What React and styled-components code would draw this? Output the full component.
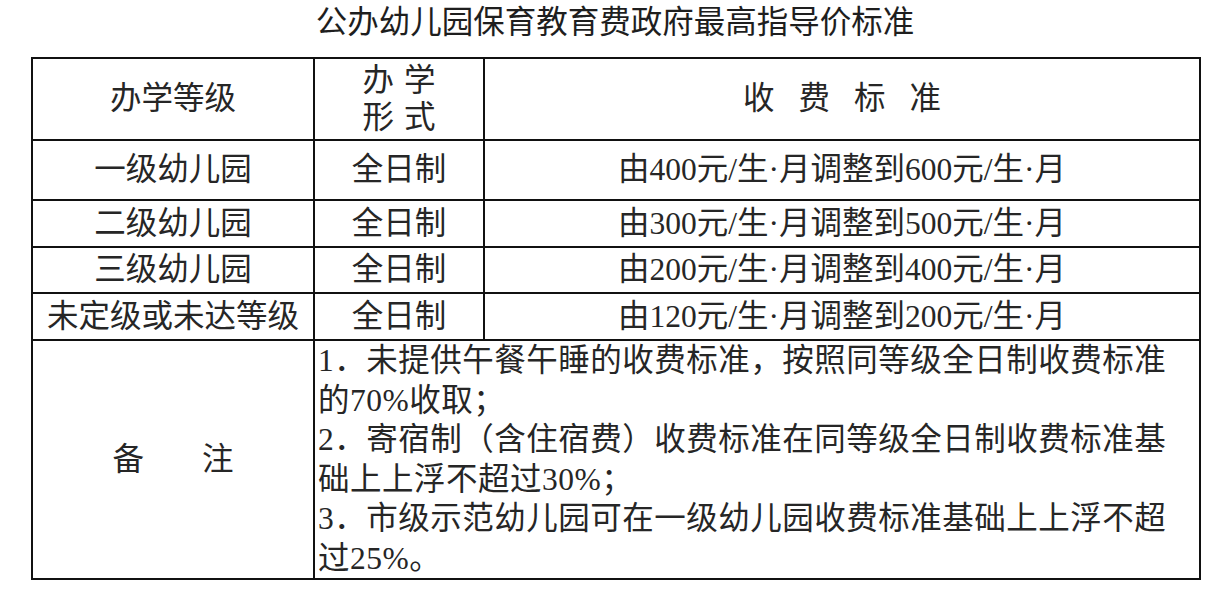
import React from "react";
import styled, { createGlobalStyle } from "styled-components";

const rows = [
  { grade: "一级幼儿园", form: "全日制", fee: "由400元/生·月调整到600元/生·月", h: 58 },
  { grade: "二级幼儿园", form: "全日制", fee: "由300元/生·月调整到500元/生·月", h: 45 },
  { grade: "三级幼儿园", form: "全日制", fee: "由200元/生·月调整到400元/生·月", h: 44 },
  { grade: "未定级或未达等级", form: "全日制", fee: "由120元/生·月调整到200元/生·月", h: 45 },
];

const notes = [
  ["1．未提供午餐午睡的收费标准，按照同等级全日制收费标准", "的70%收取；"],
  ["2．寄宿制（含住宿费）收费标准在同等级全日制收费标准基", "础上上浮不超过30%；"],
  ["3．市级示范幼儿园可在一级幼儿园收费标准基础上上浮不超", "过25%。"],
];

const App = () => {
  return (
    <>
      <GlobalStyle />
      <Page>
        <Title>公办幼儿园保育教育费政府最高指导价标准</Title>
        <PriceTable>
          <colgroup>
            <col style={{ width: 282 }} />
            <col style={{ width: 170 }} />
            <col style={{ width: 716 }} />
          </colgroup>
          <thead>
            <tr>
              <HeadCell $h={80}>办学等级</HeadCell>
              <HeadCell $h={80}>
                <StackedHead>
                  <span>办学</span>
                  <span>形式</span>
                </StackedHead>
              </HeadCell>
              <HeadCell $h={80}>
                <Spaced $gap={24}>收费标准</Spaced>
              </HeadCell>
            </tr>
          </thead>
          <tbody>
            {rows.map(row => (
              <tr key={row.grade}>
                <Cell $h={row.h}>{row.grade}</Cell>
                <Cell $h={row.h}>{row.form}</Cell>
                <Cell $h={row.h}>{row.fee}</Cell>
              </tr>
            ))}
            <tr>
              <Cell>
                <Spaced $gap={58}>备注</Spaced>
              </Cell>
              <NoteCell colSpan={2}>
                {notes.map(lines => (
                  <NoteItem key={lines[0]}>
                    {lines.map(line => (
                      <NoteLine key={line}>{line}</NoteLine>
                    ))}
                  </NoteItem>
                ))}
              </NoteCell>
            </tr>
          </tbody>
        </PriceTable>
      </Page>
    </>
  );
};

const GlobalStyle = createGlobalStyle`
  body {
    margin: 0;
    background: #ffffff;
    color: #222222;
    font-family: "Liberation Serif", "Noto Sans CJK SC", serif;
  }
`;

const Page = styled.div`
  width: 1168px;
  margin-left: 31px;
`;

const Title = styled.h1`
  margin: 0;
  height: 57px;
  padding-top: 3px;
  box-sizing: border-box;
  text-align: center;
  font-size: 31.5px;
  line-height: 40px;
  font-weight: 400;
  color: #1e1e1e;
`;

const PriceTable = styled.table`
  width: 1168px;
  table-layout: fixed;
  border-collapse: collapse;
  border: 2px solid #232323;
  font-size: 31.5px;
`;

const Cell = styled.td`
  border: 2px solid #111111;
  padding: 0;
  height: ${p => (p.$h ? `${p.$h}px` : "auto")};
  text-align: center;
  vertical-align: middle;
  line-height: 36px;
  white-space: nowrap;
  color: #262626;
`;

const HeadCell = styled(Cell).attrs({ as: "th" })`
  font-weight: 400;
`;

const StackedHead = styled.div`
  display: flex;
  flex-direction: column;
  align-items: center;
  line-height: 37px;
  letter-spacing: 10px;
  padding-left: 10px;
`;

const Spaced = styled.span`
  letter-spacing: ${p => p.$gap}px;
  padding-left: ${p => p.$gap}px;
`;

const NoteCell = styled(Cell)`
  text-align: left;
  padding: 0 0 0 3px;
  letter-spacing: 0.5px;
  line-height: 39.5px;
`;

const NoteItem = styled.div`
  display: flex;
  flex-direction: column;
`;

const NoteLine = styled.span`
  white-space: nowrap;
`;

export default App;
